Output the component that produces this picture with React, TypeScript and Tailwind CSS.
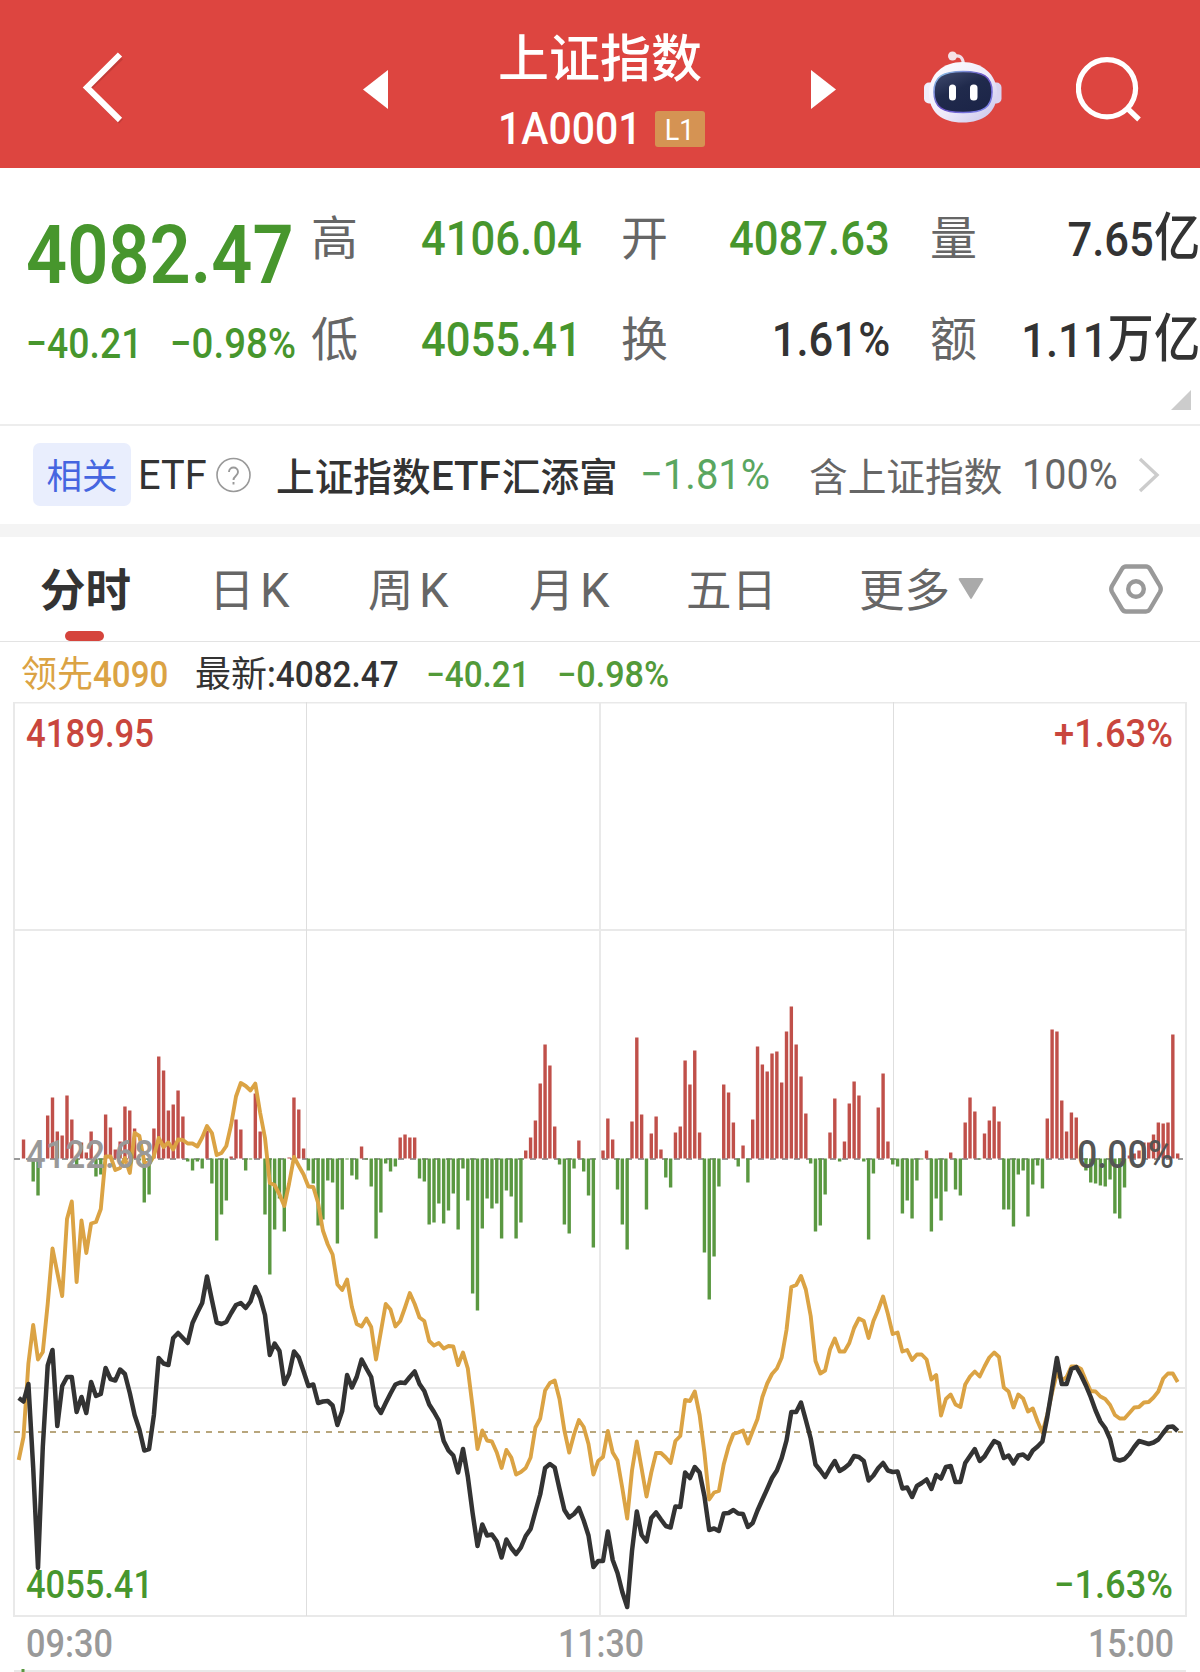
import type { ReactNode } from 'react'

const CHART_TOP = 702.5
const BASE_Y = 1158.5
const STEP = 4.829
const FIRST_X = 18.7

// minute bars, up is positive
const bars = [
  0, 19, 0, -23, -37, 0, 43, 61, 27, 23, 63, 39, -7, 16, 6, 27, -18, -16, 44, 31,
  9, 17, 52, 48, 30, -2, -44, -36, 30, 102, 88, 48, 54, 68, 42, -3, -12, -3, -10, 28,
  -25, -82, -56, -42, 2, 39, 29, -12, -1, 65, 27, -56, -116, -71, -40, -73, 1, 61, 49, 10,
  -12, -25, -67, -61, -22, -24, -85, -51, -1, -17, -21, 12, -1, -28, -80, -54, -5, -13, -8, 21,
  24, 21, 21, -20, -23, -66, -64, -45, -65, -52, -35, -71, -10, -42, -135, -152, -70, -40, -50, -45,
  -80, -32, -38, -80, -64, 8, 21, 38, 75, 114, 93, 32, -6, -66, -75, -10, 18, -13, -37, -89,
  0, 8, 40, 19, -31, -66, -91, 37, 121, 44, -51, 25, 42, 9, -19, -29, 26, 32, 98, 74,
  108, 26, -94, -141, -98, -28, 74, 66, 36, -8, 13, -24, 39, 112, 94, 87, 105, 107, 76, 127,
  152, 114, 82, 45, -5, -73, -67, -36, 26, 60, -3, 17, 55, 77, 63, -3, -81, -15, 51, 85,
  17, -6, -8, -55, -42, -60, -22, -1, 8, -73, -40, -62, -33, 6, -31, -37, 36, 61, 47, -1,
  25, 38, 52, 37, -51, -51, -68, -16, -12, -58, -26, -7, -30, 40, 129, 127, 58, 27, 46, 41,
  6, -12, -24, -25, -27, -28, -21, -55, -60, -29, 3, 5, 8, 16, 16, 24, 36, 35, 36, 124, 5,
]

const price = [
  418, 421.5, 404, 488, 588, 467, 385.5, 370, 446, 406, 397, 397, 432, 417, 433, 402, 416, 414, 388, 399,
  400.5, 389.5, 394, 413, 435, 449.5, 470.5, 469, 435, 378, 383.5, 385, 358, 353, 358, 363, 343, 332.5, 323, 296.5,
  320, 342.5, 344, 342, 333, 325, 323, 328, 321.5, 307, 317.5, 335, 375, 363.5, 371, 404, 394, 371.5, 377.5, 391.5,
  406, 404.5, 423, 421.5, 421, 425.5, 445, 431, 395, 407.5, 397, 379.5, 388.5, 397, 425.5, 433, 423, 413.5, 404.5, 402.5,
  403, 397, 391.5, 404, 411, 424.5, 432, 440.5, 461, 470.5, 475.5, 492.5, 469, 496.5, 533, 566, 544.5, 555.5, 554.5, 561.5,
  577.5, 559.5, 568, 574, 567.5, 556, 549, 531.5, 514.5, 488, 484, 487.5, 509, 530, 537.5, 534, 528, 540.5, 555.5, 587,
  581, 581, 551.5, 580, 593, 612, 627, 571, 531.5, 555, 561.5, 538, 532.5, 539.5, 546, 547.5, 526.5, 527, 492.5, 498,
  487, 492.5, 516, 550, 548.5, 551, 533.5, 533, 530, 533.5, 534, 547, 543, 530.5, 519.5, 509, 498, 490.5, 478, 460.5,
  432, 432, 422.5, 440, 458.5, 484.5, 490.5, 497, 488.5, 481, 491, 488, 484, 476, 477, 481, 500.5, 495.5, 488, 483,
  490.5, 492, 491.5, 508.5, 507.5, 517, 506, 503, 499.5, 509, 495, 498.5, 487, 486, 502, 502, 483, 476, 469, 481,
  476.5, 468.5, 461, 463.5, 478, 475.5, 483.5, 475.5, 474.5, 478.5, 470.5, 466.5, 461.5, 437, 408, 378, 404, 404, 389, 387,
  395.5, 405.5, 417, 430.5, 441.5, 448, 459, 479, 480.5, 479, 474, 467, 461, 462.5, 464, 462.5, 459.5, 453, 447, 446.5, 451,
]

const leading = [
  480, 457, 383.5, 345, 379.5, 372, 324, 268.5, 292.5, 316, 239, 221.5, 302, 240.5, 273, 243.5, 242, 229, 176.5, 176.5,
  190, 188, 178, 193, 153, 156, 182, 184, 176, 158, 167, 162.5, 169.5, 159.5, 160, 163.5, 163.5, 166.5, 157.5, 146,
  153, 175, 173, 166, 144.5, 116.5, 103, 106, 110.5, 103.5, 132.5, 158, 203, 205, 214.5, 226, 203.5, 177, 186, 194.5,
  206.5, 207, 223, 250.5, 264.5, 274.5, 304.5, 310, 299.5, 327, 344, 346.5, 338.5, 347, 379.5, 351.5, 324, 329.5, 346.5, 341,
  327.5, 313, 324, 337.5, 341, 361, 365.5, 363, 368.5, 366, 366.5, 385, 372.5, 388.5, 427, 469, 450.5, 460.5, 461.5, 472.5,
  488, 470, 477.5, 494.5, 492, 488, 477.5, 447.5, 438.5, 410.5, 403, 400.5, 419, 450.5, 472.5, 454.5, 440, 447, 464, 494.5,
  481, 477, 451, 472.5, 480.5, 508, 538.5, 490.5, 461.5, 488.5, 516.5, 492.5, 473, 473, 477.5, 483, 461, 456, 420, 421,
  411.5, 435, 472.5, 519.5, 512.5, 511, 484.5, 466.5, 454, 452.5, 450.5, 463.5, 451, 439, 417, 403.5, 394, 388.5, 377.5, 350,
  307, 305, 296, 309.5, 336, 381, 393.5, 390.5, 369.5, 358.5, 371.5, 371.5, 363, 348, 338.5, 341, 358, 341, 329.5, 316.5,
  334, 354, 352.5, 371.5, 370, 380, 374.5, 374.5, 379.5, 399.5, 395, 435.5, 419, 414.5, 424.5, 427, 404.5, 396.5, 391.5, 396.5,
  386.5, 377.5, 372.5, 377, 407.5, 411.5, 427.5, 414.5, 418.5, 431.5, 428.5, 441.5, 452.5, 434.5, 412.5, 393, 400.5, 397, 386.5, 386.5,
  389, 400.5, 411, 411.5, 416.5, 419, 425, 435, 438.5, 438.5, 433, 427.5, 427, 422.5, 422, 417.5, 411.5, 398.5, 393.5, 393.5, 402,
]

const toPoints = (values: number[]) =>
  values.map((v, i) => `${(FIRST_X + i * STEP).toFixed(1)},${980 + v}`).join(' ')

// narrow digits, squeezed inside a box of known width
function Num({ w, className = '', children }: { w: string; className?: string; children: ReactNode }) {
  return (
    <span className={`flex shrink-0 ${w}`}>
      <span className={`inline-block origin-left whitespace-nowrap ${className}`}>{children}</span>
    </span>
  )
}

function RobotIcon() {
  return (
    <svg width="80" height="76" viewBox="0 0 80 76" fill="none">
      <defs>
        <linearGradient id="shell" x1="0" y1="0" x2="1" y2="1">
          <stop offset="0" stopColor="#ffffff" />
          <stop offset="0.55" stopColor="#eeeafa" />
          <stop offset="1" stopColor="#c6c2ea" />
        </linearGradient>
        <linearGradient id="rim" x1="0" y1="0" x2="1" y2="1">
          <stop offset="0" stopColor="#8fd0ea" />
          <stop offset="0.5" stopColor="#6a4fc4" />
          <stop offset="1" stopColor="#7d8cf0" />
        </linearGradient>
        <linearGradient id="face" x1="0" y1="0" x2="0.6" y2="1">
          <stop offset="0" stopColor="#414c70" />
          <stop offset="0.5" stopColor="#202a4c" />
          <stop offset="1" stopColor="#1c2548" />
        </linearGradient>
      </defs>
      <path d="M30 6.500c6-2 10 0 10.500 8" stroke="#f1dfe9" strokeWidth="3.2" />
      <circle cx="29.500" cy="6" r="4.500" fill="#f6e2e8" />
      <rect x="1" y="32.500" width="12" height="21" rx="5" fill="#f0edfb" />
      <rect x="66.500" y="32.500" width="12" height="21" rx="5" fill="#d9d4f1" />
      <path d="M39.500 12C58.500 12 74 24 74 43S60.500 72.500 39.500 72.500 6 62 6 43 20.500 12 39.500 12Z" fill="url(#shell)" />
      <path d="M40 21.500c20 0 29 5 29 20.500S60 62.500 40 62.500 11 57.500 11 42s9-20.500 29-20.500Z" fill="url(#face)" stroke="url(#rim)" strokeWidth="1.6" />
      <rect x="26" y="34.500" width="7" height="16" rx="3.5" fill="#fff" />
      <rect x="47" y="34.500" width="7.500" height="16" rx="3.5" fill="#fff" />
    </svg>
  )
}

function Header() {
  return (
    <header className="flex h-[168px] bg-[#dd4540] text-white">
      <svg className="mt-[50px] ml-[80px] shrink-0" width="46" height="76" viewBox="0 0 46 76" fill="none">
        <path d="M41 7.500 8 39l33 32.500" stroke="#a93430" strokeOpacity=".5" strokeWidth="5.500" />
        <path d="M40 4.500 7 37.500l33 32.500" stroke="#fff" strokeWidth="6" />
      </svg>
      <svg className="mt-[70px] ml-[237px] shrink-0" width="25" height="39" viewBox="0 0 25 39">
        <path d="M25 0v39L0 19.5z" fill="#fff" />
      </svg>
      <div className="ml-[110px] w-[314px] shrink-0 pt-[31px]">
        <h1 className="text-[51px] leading-[58px] font-medium">上证指数</h1>
        <div className="mt-[14px] flex h-[52px] items-center">
          <Num w="w-[157px]" className="scale-x-[0.91] text-[45px] font-medium">1A0001</Num>
          <span className="flex h-[36px] w-[50px] items-center justify-center rounded-[3px] bg-[#d59353] text-[30px]">
            <span className="scale-x-[0.9]">L1</span>
          </span>
        </div>
      </div>
      <svg className="mt-[70px] -ml-[1px] shrink-0" width="25" height="39" viewBox="0 0 25 39">
        <path d="M0 0v39l25-19.5z" fill="#fff" />
      </svg>
      <div className="mt-[50px] ml-[87px] shrink-0">
        <RobotIcon />
      </div>
      <svg className="mt-[56px] ml-[73px] shrink-0" width="68" height="68" viewBox="0 0 68 68" fill="none" stroke="#fff" strokeWidth="5.200">
        <circle cx="31" cy="32.300" r="28.600" />
        <path d="m51.500 52.500 11.500 11" />
      </svg>
    </header>
  )
}

function Quote() {
  const label = 'w-[46px] shrink-0 text-[47px] leading-[60px] text-[#666]'
  const value = 'flex shrink-0 justify-end'
  const digits = 'inline-block origin-right whitespace-nowrap text-[49px] leading-[60px] font-medium scale-x-[0.89]'
  return (
    <section className="relative flex h-[258px] border-b-2 border-[#ededed] pl-[26px] text-[#333]">
      <div className="w-[285px] shrink-0 text-[#47962d]">
        <Num w="w-[285px]" className="mt-[40px] scale-x-[0.89] text-[81px] leading-[96px] font-semibold">4082.47</Num>
        <div className="mt-[15px] flex text-[42px] leading-[50px] font-medium">
          <Num w="w-[144px]" className="scale-x-[0.89]">−40.21</Num>
          <Num w="w-[140px]" className="scale-x-[0.915]">−0.98%</Num>
        </div>
      </div>
      <div className="mt-[41px] flex flex-col gap-[40px]">
        <div className="flex">
          <span className={label}>高</span>
          <span className={`w-[225px] text-[#47962d] ${value}`}><span className={digits}>4106.04</span></span>
          <span className={`ml-[39px] ${label}`}>开</span>
          <span className={`w-[223px] text-[#47962d] ${value}`}><span className={digits}>4087.63</span></span>
          <span className={`ml-[40px] ${label}`}>量</span>
          <span className={`w-[224px] ${value}`}><span className={digits}>7.65<span className="text-[52px]">亿</span></span></span>
        </div>
        <div className="flex">
          <span className={label}>低</span>
          <span className={`w-[225px] text-[#47962d] ${value}`}><span className={digits}>4055.41</span></span>
          <span className={`ml-[39px] ${label}`}>换</span>
          <span className={`w-[223px] ${value}`}><span className={digits}>1.61%</span></span>
          <span className={`ml-[40px] ${label}`}>额</span>
          <span className={`w-[224px] ${value}`}><span className={digits}>1.11<span className="text-[52px]">万亿</span></span></span>
        </div>
      </div>
      <svg className="absolute top-[222px] left-[1171px]" width="20" height="20" viewBox="0 0 20 20">
        <path d="M20 0v20H0z" fill="#ccc" />
      </svg>
    </section>
  )
}

function RelatedEtf() {
  return (
    <section className="flex h-[98px] items-center pl-[33px] text-[38.7px] text-[#333]">
      <span className="-mt-[1px] flex h-[63px] w-[98px] shrink-0 items-center justify-center rounded-[7px] bg-[#e9eefd] pt-[6px] text-[35.5px] text-[#4565e0]">相关</span>
      <Num w="ml-[7px] mt-[2px] w-[78px]" className="scale-x-[0.97] text-[41px]">ETF</Num>
      <svg className="shrink-0" width="35" height="36" viewBox="0 0 35 36" fill="none" stroke="#999" strokeWidth="1.6">
        <circle cx="17.5" cy="18" r="16.5" />
        <path d="M13 15c0-6 9-6 9 0 0 4-4.500 4-4.500 8M17.500 25v2.500" strokeWidth="1.9" />
      </svg>
      <span className="mt-[6px] ml-[25px] flex w-[364px] shrink-0 font-medium whitespace-nowrap">
        上证指数
        <Num w="w-[71px]" className="scale-x-[0.98] text-[41px] leading-[55px]">ETF</Num>
        汇添富
      </span>
      <Num w="w-[169px]" className="-mt-[1px] scale-x-[0.93] text-[43px] text-[#5aa660]">−1.81%</Num>
      <span className="mt-[6px] w-[213px] shrink-0 text-[#666]">含上证指数</span>
      <Num w="w-[116px]" className="-mt-[1px] scale-x-[0.92] text-[43px] text-[#666]">100%</Num>
      <svg className="shrink-0" width="22" height="36" viewBox="0 0 22 36" fill="none">
        <path d="m2 2 17 16L2 34" stroke="#ccc" strokeWidth="3.4" />
      </svg>
    </section>
  )
}

const tabs = [
  { name: '日', k: true, pos: 'ml-[78px] w-[159px]' },
  { name: '周', k: true, pos: 'w-[161px]' },
  { name: '月', k: true, pos: 'w-[157px]' },
  { name: '五日', k: false, pos: 'w-[173px]' },
  { name: '更多', k: false, pos: 'w-[99px]' },
]

function Tabs() {
  return (
    <nav className="flex h-[105px] items-center border-b border-[#e3e3e3] pl-[40px] text-[45.5px] text-[#666]">
      <div className="relative w-[91px] shrink-0 pt-[6px] leading-[98px] font-bold text-[#333]">
        分时
        <i className="absolute bottom-0 left-[25px] h-[10px] w-[39px] rounded-[5px] bg-[#d5443c]" />
      </div>
      {tabs.map((tab) => (
        <div key={tab.name} className={`flex shrink-0 items-center pt-[7px] ${tab.pos}`}>
          {tab.name}
          {tab.k && <span className="-mt-[3px] ml-[5px] inline-block origin-left scale-x-[0.98] text-[48px]">K</span>}
        </div>
      ))}
      <svg className="shrink-0" width="26" height="22" viewBox="0 0 26 22">
        <path d="M2 0h22q2 0 1 2L14 20q-1 2-2 0L1 2Q0 0 2 0Z" fill="#aaa" />
      </svg>
      <svg className="ml-[125px] shrink-0" width="54" height="50" viewBox="0 0 54 50" fill="none" stroke="#999" strokeWidth="4.400">
        <path d="M17 2.500h20q2.500 0 4 2.500l10 17q1.500 3 0 6L41 45q-1.500 2.500-4 2.500H17q-2.500 0-4-2.500L3 28q-1.500-3 0-6L13 5q1.500-2.500 4-2.500Z" />
        <circle cx="27" cy="25" r="7.800" />
      </svg>
    </nav>
  )
}

function Legend() {
  return (
    <div className="flex h-[60px] items-center pt-[6px] pl-[21px] text-[36px] font-medium text-[#333]">
      <span className="font-normal text-[#dba344]">领先</span>
      <Num w="w-[102px]" className="scale-x-[0.92] text-[#dba344]">4090</Num>
      <span className="font-normal">最新</span>
      <Num w="w-[159px]" className="scale-x-[0.925]">:4082.47</Num>
      <Num w="w-[131px]" className="scale-x-[0.925] text-[#529a39]">−40.21</Num>
      <Num w="w-[130px]" className="scale-x-[0.95] text-[#529a39]">−0.98%</Num>
    </div>
  )
}

function Label({ x, y, w, fill, children }: { x: number; y: number; w: number; fill: string; children: string }) {
  return (
    <text x={x} y={y} textLength={w} lengthAdjust="spacingAndGlyphs" fill={fill} fontSize="39" fontWeight="500">
      {children}
    </text>
  )
}

function Chart() {
  return (
    <svg className="block" width="1200" height="970" viewBox="0 702 1200 970" fill="none">
      <g stroke="#e9e9e9" strokeWidth="2">
        <rect x="14" y={CHART_TOP} width="1172" height="913.500" />
        <path d="M14 930H1186M14 1388H1186M600 702V1616M14 1671H1186" />
        <path d="M306.500 702V1616M893.500 702V1616" stroke="#dedede" strokeWidth="1" />
      </g>
      <path d="M14 1159H1183" stroke="#999" strokeWidth="2" strokeDasharray="6 6" />
      {bars.map((h, i) =>
        h === 0 ? null : (
          <rect
            key={i}
            x={FIRST_X + i * STEP - 1.7}
            y={h > 0 ? BASE_Y - h : BASE_Y}
            width="3.400"
            height={Math.abs(h)}
            fill={h > 0 ? '#c0504a' : '#5a9841'}
          />
        ),
      )}
      <path d="M14 1432H1183" stroke="#b8a67c" strokeWidth="2" strokeDasharray="6 6" />
      <g strokeLinejoin="round">
        <polyline points={toPoints(leading)} stroke="#dba344" strokeWidth="3.900" />
        <polyline points={toPoints(price)} stroke="#333" strokeWidth="4.500" />
      </g>
      <Label x={26} y={747} w={128} fill="#c9463d">4189.95</Label>
      <Label x={1054} y={747} w={119} fill="#c9463d">+1.63%</Label>
      <Label x={26} y={1168} w={128} fill="#999">4122.68</Label>
      <Label x={1077} y={1168} w={97} fill="#555">0.00%</Label>
      <Label x={26} y={1598} w={127} fill="#47962d">4055.41</Label>
      <Label x={1054} y={1598} w={119} fill="#47962d">−1.63%</Label>
      <Label x={26} y={1657} w={87} fill="#999">09:30</Label>
      <Label x={558} y={1657} w={86} fill="#999">11:30</Label>
      <Label x={1088} y={1657} w={86} fill="#999">15:00</Label>
      <path d="M23 1669v3" stroke="#5a9841" strokeWidth="3" />
    </svg>
  )
}

export default function App() {
  return (
    <main className="h-[1672px] w-[1200px] overflow-hidden bg-white font-[Roboto,'Noto_Sans_CJK_SC',sans-serif]">
      <Header />
      <Quote />
      <RelatedEtf />
      <div className="h-[13px] bg-[#f4f4f4]" />
      <Tabs />
      <Legend />
      <Chart />
    </main>
  )
}
